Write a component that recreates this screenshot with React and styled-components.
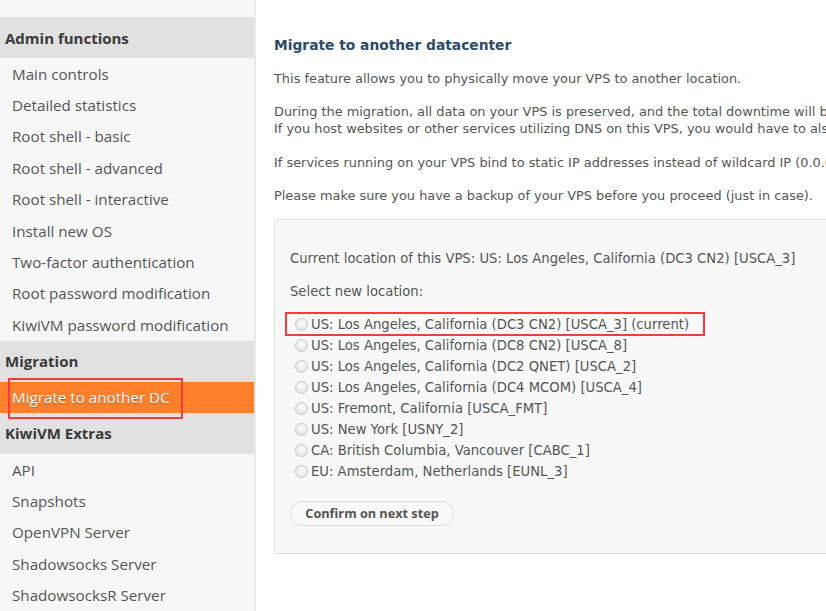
import React from "react";
import styled, { createGlobalStyle } from "styled-components";

const GlobalStyle = createGlobalStyle`
  html, body {
    margin: 0;
    padding: 0;
    background: #fff;
    overflow: hidden;
  }
`;

const Page = styled.div`
  display: flex;
  width: 826px;
  height: 611px;
  overflow: hidden;
`;

const Sidebar = styled.nav`
  flex: 0 0 254px;
  background: #f7f7f7;
  border-right: 2px solid #e9e9e9;
  padding-top: 17px;
  font-family: "Open Sans", "Liberation Sans", sans-serif;
`;

const GroupTitle = styled.div`
  height: 41px;
  display: flex;
  align-items: center;
  padding-left: 5px;
  background: #e1e1e1;
  color: #3a3a3a;
  font-weight: 700;
  font-size: 15px;
`;

const NavItem = styled.div`
  position: relative;
  height: 31.4px;
  display: flex;
  align-items: center;
  padding-left: 12px;
  font-size: 15.2px;
  color: ${p => (p.active ? "#fff" : "#555")};
  background: ${p => (p.active ? "#fd7f2c" : "transparent")};
  text-shadow: ${p => (p.active ? "0 1px 1px rgba(0,0,0,.25)" : "none")};

  ${p => p.marked && `
    &::after {
      content: "";
      position: absolute;
      left: 8px;
      width: 171px;
      top: -4px;
      bottom: -6px;
      border: 2px solid #f53b3b;
    }
  `}
`;

const Main = styled.main`
  flex: 0 0 auto;
  width: 640px;
  padding: 35px 0 0 18px;
  font-family: Verdana, "DejaVu Sans", sans-serif;
  font-size: 12.9px;
  color: #555;
`;

const Title = styled.h2`
  margin: 0 0 14.5px;
  font-size: 13.8px;
  line-height: 20px;
  color: #2c4a6a;
  font-weight: 700;
`;

const Para = styled.p`
  margin: 0 0 16.5px;
  line-height: 17px;
  white-space: nowrap;

  &:last-of-type {
    margin-bottom: 14.5px;
  }
`;

const Panel = styled.section`
  width: 620px;
  background: #f8f8f8;
  border: 1px solid #e0e0e0;
  border-radius: 3px;
  padding: 30px 15px 27px;
  font-size: 13.2px;
`;

const Line = styled.div`
  line-height: 17px;
  margin-bottom: ${p => p.gap || 0}px;
  white-space: nowrap;
`;

const Options = styled.div`
  display: flex;
  flex-direction: column;
  align-items: flex-start;
  margin-bottom: 19px;
`;

const Option = styled.label`
  position: relative;
  display: inline-flex;
  align-items: center;
  height: 21px;
  padding-left: 5px;
  gap: 3px;
  white-space: nowrap;

  ${p => p.marked && `
    &::after {
      content: "";
      position: absolute;
      left: -5px;
      right: -16px;
      top: -2px;
      bottom: -1px;
      border: 2px solid #f53b3b;
    }
  `}
`;

const Radio = styled.input.attrs({ type: "radio" })`
  appearance: none;
  margin: 0;
  width: 13px;
  height: 13px;
  border-radius: 50%;
  border: 1px solid #c4c4c4;
  background: radial-gradient(circle at 50% 35%, #fcfcfc 0%, #ebebeb 60%, #dadada 100%);
  flex: 0 0 auto;
`;

const Button = styled.button`
  height: 25px;
  width: 164px;
  border: 1px solid #dcdcdc;
  border-radius: 13px;
  background: #f9f9f9;
  color: #555;
  font-family: "Open Sans", "Liberation Sans", sans-serif;
  font-weight: 700;
  font-size: 12.7px;
  padding: 0;
  cursor: pointer;
`;

const groups = [
  {
    title: "Admin functions",
    items: [
      "Main controls",
      "Detailed statistics",
      "Root shell - basic",
      "Root shell - advanced",
      "Root shell - interactive",
      "Install new OS",
      "Two-factor authentication",
      "Root password modification",
      "KiwiVM password modification",
    ],
  },
  { title: "Migration", items: ["Migrate to another DC"] },
  {
    title: "KiwiVM Extras",
    items: ["API", "Snapshots", "OpenVPN Server", "Shadowsocks Server", "ShadowsocksR Server"],
  },
];

const locations = [
  "US: Los Angeles, California (DC3 CN2) [USCA_3] (current)",
  "US: Los Angeles, California (DC8 CN2) [USCA_8]",
  "US: Los Angeles, California (DC2 QNET) [USCA_2]",
  "US: Los Angeles, California (DC4 MCOM) [USCA_4]",
  "US: Fremont, California [USCA_FMT]",
  "US: New York [USNY_2]",
  "CA: British Columbia, Vancouver [CABC_1]",
  "EU: Amsterdam, Netherlands [EUNL_3]",
];

export default function App() {
  return (
    <Page>
      <GlobalStyle />
      <Sidebar>
        {groups.map(g => (
          <div key={g.title}>
            <GroupTitle>{g.title}</GroupTitle>
            {g.items.map(it => {
              const on = it === "Migrate to another DC";
              return (
                <NavItem key={it} active={on} marked={on}>
                  {it}
                </NavItem>
              );
            })}
          </div>
        ))}
      </Sidebar>
      <Main>
        <Title>Migrate to another datacenter</Title>
        <Para>This feature allows you to physically move your VPS to another location.</Para>
        <Para>
          During the migration, all data on your VPS is preserved, and the total downtime will be minimal.
          <br />
          If you host websites or other services utilizing DNS on this VPS, you would have to also update DNS records.
        </Para>
        <Para>If services running on your VPS bind to static IP addresses instead of wildcard IP (0.0.0.0), you will need to update them.</Para>
        <Para>Please make sure you have a backup of your VPS before you proceed (just in case).</Para>
        <Panel>
          <Line gap={16}>Current location of this VPS: US: Los Angeles, California (DC3 CN2) [USCA_3]</Line>
          <Line gap={14}>Select new location:</Line>
          <Options>
            {locations.map((loc, i) => (
              <Option key={loc} marked={i === 0}>
                <Radio name="loc" disabled={i === 0} />
                {loc}
              </Option>
            ))}
          </Options>
          <Button>Confirm on next step</Button>
        </Panel>
      </Main>
    </Page>
  );
}
